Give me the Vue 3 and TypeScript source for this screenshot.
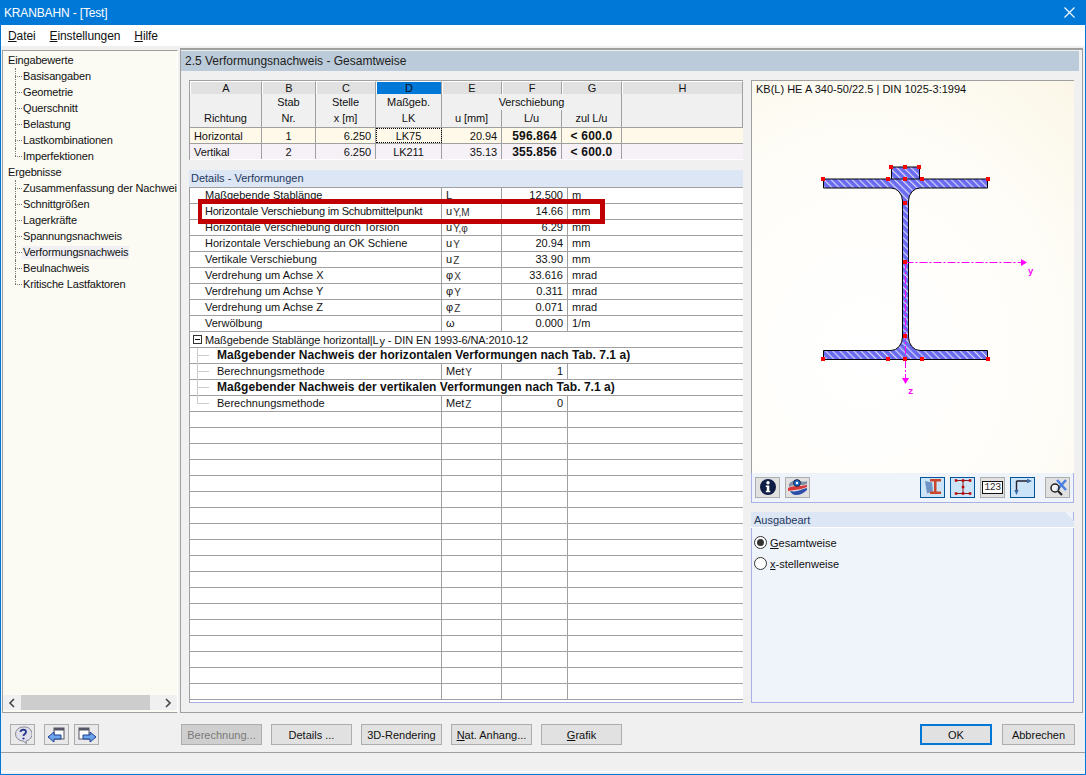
<script setup lang="ts">
const tree1 = ['Basisangaben','Geometrie','Querschnitt','Belastung','Lastkombinationen','Imperfektionen']
const tree2 = ['Zusammenfassung der Nachweise','Schnittgrößen','Lagerkräfte','Spannungsnachweis','Verformungsnachweis','Beulnachweis','Kritische Lastfaktoren']
interface Row { label: string; sym?: string; sub?: string; val?: string; unit?: string; tight?: boolean }
const rows: Row[] = [
  { label:'Maßgebende Stablänge', sym:'L', val:'12.500', unit:'m' },
  { label:'Horizontale Verschiebung im Schubmittelpunkt', sym:'u', sub:'Y,M', val:'14.66', unit:'mm', tight: true },
  { label:'Horizontale Verschiebung durch Torsion', sym:'u', sub:'Y,φ', val:'6.29', unit:'mm' },
  { label:'Horizontale Verschiebung an OK Schiene', sym:'u', sub:'Y', val:'20.94', unit:'mm' },
  { label:'Vertikale Verschiebung', sym:'u', sub:'Z', val:'33.90', unit:'mm' },
  { label:'Verdrehung um Achse X', sym:'φ', sub:'X', val:'33.616', unit:'mrad' },
  { label:'Verdrehung um Achse Y', sym:'φ', sub:'Y', val:'0.311', unit:'mrad' },
  { label:'Verdrehung um Achse Z', sym:'φ', sub:'Z', val:'0.071', unit:'mrad' },
  { label:'Verwölbung', sym:'ω', val:'0.000', unit:'1/m' },
]
const empties = Array.from({ length: 18 }, (_, i) => i)
const markers: [number, number][] = [[823,179],[888,179],[905,179],[922,179],[988,179],[891,167],[905,167],[919,167],[905,203],[905,262],[905,336],[823,359],[888,359],[905,359],[922,359],[988,359]]
</script>

<template>
  <div class="win">
    <div class="title">
      <span>KRANBAHN - [Test]</span>
      <svg width="11" height="11" viewBox="0 0 11 11"><path d="M.5 .5 10.500 10.500M10.500 .5 .5 10.500" stroke="#fff" stroke-width="1.100" fill="none"/></svg>
    </div>
    <div class="menu">
      <span><u>D</u>atei</span><span><u>E</u>instellungen</span><span><u>H</u>ilfe</span>
    </div>
    <div class="middle">
      <aside class="nav">
        <div class="navtree">
          <div class="troot">Eingabewerte</div>
          <div class="tgroup">
            <div v-for="t in tree1" :key="t" class="titem">{{ t }}</div>
          </div>
          <div class="troot">Ergebnisse</div>
          <div class="tgroup">
            <div v-for="t in tree2" :key="t" class="titem" :class="{ sel: t === 'Verformungsnachweis' }"><span>{{ t }}</span></div>
          </div>
        </div>
        <div class="hscroll">
          <svg width="8" height="10" viewBox="0 0 8 10"><path d="M6 1 2 5l4 4" fill="none" stroke="#444" stroke-width="1.600"/></svg>
          <div class="thumbtrack"><div class="thumb"></div></div>
          <svg width="8" height="10" viewBox="0 0 8 10"><path d="M2 1l4 4-4 4" fill="none" stroke="#444" stroke-width="1.600"/></svg>
        </div>
      </aside>
      <main class="content">
        <div class="heading">2.5 Verformungsnachweis - Gesamtweise</div>
        <div class="panels">
          <section class="leftcol">
            <div class="top">
              <div class="cols th">
                <b>A</b><b>B</b><b>C</b><b class="active">D</b><b>E</b><b>F</b><b>G</b><b>H</b>
              </div>
              <div class="cols hd">
                <div class="hc bot">Richtung</div>
                <div class="hc">Stab<br>Nr.</div>
                <div class="hc">Stelle<br>x [m]</div>
                <div class="hc">Maßgeb.<br>LK</div>
                <div class="span3">
                  <div class="vh">Verschiebung</div>
                  <div class="sub3"><span>u [mm]</span><span>L/u</span><span>zul L/u</span></div>
                </div>
                <div class="hc"></div>
              </div>
              <div class="cols dr r1">
                <div class="l">Horizontal</div><div class="c">1</div><div class="r">6.250</div><div class="c focus">LK75</div><div class="r">20.94</div><div class="r bold">596.864</div><div class="c bold">&lt; 600.0</div><div></div>
              </div>
              <div class="cols dr r2">
                <div class="l">Vertikal</div><div class="c">2</div><div class="r">6.250</div><div class="c">LK211</div><div class="r">35.13</div><div class="r bold">355.856</div><div class="c bold">&lt; 600.0</div><div></div>
              </div>
            </div>
            <div class="detailhead">Details - Verformungen</div>
            <div class="details">
              <div v-for="r in rows" :key="r.label" class="drow">
                <div class="lab" :class="{ tight: r.tight }">{{ r.label }}</div>
                <div class="sym">{{ r.sym }}<small v-if="r.sub">{{ r.sub }}</small></div>
                <div class="val">{{ r.val }}</div>
                <div class="unit">{{ r.unit }}</div>
              </div>
              <div class="drow groupr">
                <div class="glab"><i class="minus"></i>Maßgebende Stablänge horizontal|L<small>y</small>&nbsp;- DIN EN 1993-6/NA:2010-12</div>
              </div>
              <div class="drow wide treeline">
                <div class="lab2 strong">Maßgebender Nachweis der horizontalen Verformungen nach Tab. 7.1 a)</div>
              </div>
              <div class="drow treeline">
                <div class="lab2">Berechnungsmethode</div>
                <div class="sym">Met<small>Y</small></div><div class="val">1</div><div class="unit"></div>
              </div>
              <div class="drow wide treeline">
                <div class="lab2 strong">Maßgebender Nachweis der vertikalen Verformungen nach Tab. 7.1 a)</div>
              </div>
              <div class="drow treeline last">
                <div class="lab2">Berechnungsmethode</div>
                <div class="sym">Met<small>Z</small></div><div class="val">0</div><div class="unit"></div>
              </div>
              <div v-for="e in empties" :key="e" class="drow">
                <div class="lab"></div><div class="sym"></div><div class="val"></div><div class="unit"></div>
              </div>
              <div class="redbox"></div>
            </div>
          </section>
          <section class="rightcol">
            <div class="viewer">
              <div class="caption">KB(L) HE A 340-50/22.5 | DIN 1025-3:1994</div>
              <svg class="drawing" width="322" height="392" viewBox="752 81 322 392">
                <defs>
                  <pattern id="hatch" width="5" height="5" patternUnits="userSpaceOnUse" patternTransform="rotate(-45)">
                    <rect width="5" height="5" fill="#6a6af0"/>
                    <rect x="0" width="1.200" height="5" fill="#d4d6fa"/>
                  </pattern>
                </defs>
                <path d="M823.500 179H891.500V167H919.500V179H987.500V188H920A11.500 13 0 0 0 908.500 201V337A11.500 13.500 0 0 0 920 350.500H987.500V359.500H823.500V350.500H891A11.500 13.500 0 0 0 902.500 337V201A11.500 13 0 0 0 891 188H823.500Z" fill="url(#hatch)" stroke="#000" stroke-width="1"/>
                <path d="M891.500 179H919.500" stroke="#000" stroke-width="1"/>
                <path d="M905.500 262.500H1022" stroke="#f0f" stroke-dasharray="8 2 2 2" fill="none"/>
                <path d="M905.500 262V378" stroke="#f0f" stroke-dasharray="8 2 2 2" fill="none"/>
                <path d="M1021 259 1027 262.500 1021 266Z" fill="#f0f"/>
                <path d="M902 378H909L905.500 384Z" fill="#f0f"/>
                <rect v-for="(m, i) in markers" :key="i" :x="m[0] - 2" :y="m[1] - 2" width="4" height="4" fill="#f00"/>
                <text x="1028" y="274" class="axis">y</text>
                <text x="908" y="394" class="axis">z</text>
              </svg>
            </div>
            <div class="toolbar">
              <button class="tb"><svg width="18" height="18" viewBox="0 0 18 18"><circle cx="9" cy="9" r="8" fill="#0d1c44"/><circle cx="9" cy="4.800" r="1.700" fill="#fff"/><path d="M6.800 7.500h3.500v5.200h1v1.500H6.800v-1.500h1v-3.700h-1z" fill="#fff"/></svg></button>
              <button class="tb ml5"><svg width="22" height="18" viewBox="0 0 22 18"><path d="M2 6c3-4 8-5 11-3 3 1 5 1 7 0v3c-2 1-4 1-7 1-4 0-7 0-11 2z" fill="#7f8fa8"/><path d="M1 10c4-2 8-2 12-2l7-1v2l-6 2c-3 1-9 1-13 2z" fill="#d83a3a"/><path d="M3 13c4 1 9 0 13-2l4-1v2c-3 3-7 5-11 5-3 0-5-2-6-4z" fill="#2c4da8"/><circle cx="10" cy="5" r="3.400" fill="#1c6ac8" stroke="#112" stroke-width=".8"/><circle cx="10" cy="5" r="1.200" fill="#fff"/></svg></button>
              <div class="grow"></div>
              <button class="tb on"><svg width="20" height="18" viewBox="0 0 20 18"><path d="M2 3 9 4.500 10 13.500 4 15.500z" fill="#6e94c4"/><path d="M7 1h11v2.500h-4.500v10H18V16H7v-2.500h4V3.500H7z" fill="#c9452c"/></svg></button>
              <button class="tb on ml5"><svg width="20" height="18" viewBox="0 0 20 18"><path d="M2 2.500h16M2 15.500h16M10 2.500v13" stroke="#8a1a1a" fill="none"/><path d="M3 2.500h.1M10 2.500h.1M17 2.500h.1M3 15.500h.1M10 15.500h.1M17 15.500h.1M10 9h.1" stroke="#b00" stroke-width="2.400" stroke-linecap="square" fill="none"/></svg></button>
              <button class="tb ml5"><span class="num">123</span></button>
              <button class="tb on ml5"><svg width="20" height="18" viewBox="0 0 20 18"><path d="M3.500 3H17M3.500 3V14" stroke="#223" stroke-width="1.400" fill="none"/><path d="M19 3 14 .8v4.400zM3.500 17 1.300 12h4.400z" fill="#3a6aa8"/></svg></button>
              <button class="tb ml10"><svg width="20" height="18" viewBox="0 0 20 18"><path d="M9 2 18 12M18 2 9 12" stroke="#4a7fe0" stroke-width="2.500" fill="none"/><circle cx="7" cy="10" r="4" fill="#fff" fill-opacity=".6" stroke="#222" stroke-width="1.500"/><path d="M10 13 14 17" stroke="#222" stroke-width="2.200"/></svg></button>
            </div>
            <div class="output">
              <div class="outhead">Ausgabeart</div>
              <label class="radio"><i class="dot checked"></i><span><u>G</u>esamtweise</span></label>
              <label class="radio"><i class="dot"></i><span><u>x</u>-stellenweise</span></label>
            </div>
          </section>
        </div>
      </main>
    </div>
    <div class="footer">
      <button class="btn icon"><svg width="18" height="18" viewBox="0 0 18 18"><path d="M9 1a7.500 7 0 0 1 3 14l.5 2.500-3.500-2.500a7.500 7 0 0 1 0-14z" fill="#dfe0ea" stroke="#8a8a98"/><path d="M6.500 6c.3-3 5.500-3 5.500 0 0 2-2.500 2-2.500 4" fill="none" stroke="#2a3a90" stroke-width="1.800"/><circle cx="9.500" cy="12.500" r="1.100" fill="#2a3a90"/></svg></button>
      <button class="btn icon m9"><svg width="20" height="18" viewBox="0 0 20 18"><rect x="7" y="2" width="10" height="11" fill="#fff" stroke="#556"/><rect x="7" y="2" width="10" height="2.500" fill="#556"/><path d="M1 11 7 6v3h7v4H7v3z" fill="#6aa5ec" stroke="#1e3e90"/></svg></button>
      <button class="btn icon m5"><svg width="20" height="18" viewBox="0 0 20 18"><rect x="2" y="2" width="10" height="11" fill="#fff" stroke="#556"/><rect x="2" y="2" width="10" height="2.500" fill="#556"/><path d="M19 11 13 6v3H6v4h7v3z" fill="#6aa5ec" stroke="#1e3e90"/></svg></button>
      <button class="btn wide disabled m82">Berechnung...</button>
      <button class="btn wide m9">Details ...</button>
      <button class="btn wide m9">3D-Rendering</button>
      <button class="btn wide m9"><u>N</u>at. Anhang...</button>
      <button class="btn wide m9"><u>G</u>rafik</button>
      <div class="grow"></div>
      <button class="btn ok">OK</button>
      <button class="btn cancel">Abbrechen</button>
    </div>
    <div class="status"></div>
  </div>
</template>

<style>
html, body { margin: 0; padding: 0; background: #f0f0f0; }
</style>

<style scoped>
.win { box-sizing: border-box; width: 1086px; height: 775px; display: flex; flex-direction: column; overflow: hidden; background: #f0f0f0; border: 1px solid #0078d7; border-top: 0; font: 11px/16px "Liberation Sans", Arial, sans-serif; color: #111; }
.title { height: 25px; flex: none; margin: 0 -1px; padding: 0 11px 0 4px; background: #0078d7; color: #fff; display: flex; align-items: center; justify-content: space-between; font-size: 12px; letter-spacing: -0.150px; }
.menu { height: 21px; flex: none; background: #fff; display: flex; gap: 14px; padding-left: 7px; align-items: center; font-size: 12px; letter-spacing: -0.100px; }
.middle { height: 667px; flex: none; display: flex; padding-top: 2px; box-sizing: border-box; }
.nav { box-sizing: border-box; width: 176px; margin: 2px 0 0 1px; flex: none; height: 663px; background: #fbfaf3; border: 1px solid #a0a0a0; border-right: 1px solid #fff; display: flex; flex-direction: column; overflow: hidden; padding-bottom: 2px; }
.navtree { flex: 1; padding: 1px 0 0 5px; white-space: nowrap; overflow: hidden; letter-spacing: -0.150px; }
.troot { height: 16px; }
.tgroup { margin-left: 7px; }
.titem { height: 16px; padding-left: 8px; position: relative; }
.titem::before { content: ""; position: absolute; left: 0; top: 8px; width: 7px; border-top: 1px dotted #777; }
.titem::after { content: ""; position: absolute; left: 0; top: 0; height: 16px; border-left: 1px dotted #777; }
.titem:last-child::after { height: 8px; }
.sel span { background: #efeff4; display: inline-block; line-height: 13px; margin-left: -1px; padding: 0 1px; }
.hscroll { height: 15px; flex: none; background: #f0f0f0; display: flex; align-items: center; padding: 0 5px; gap: 5px; }
.thumbtrack { flex: 1; height: 15px; }
.thumb { width: 129px; height: 15px; background: #cdcdcd; }
.content { width: 903px; flex: none; margin-left: 2px; box-sizing: border-box; height: 665px; border: 1px solid #a0a0a0; border-top: 2px solid #a0a0a0; display: flex; flex-direction: column; }
.heading { height: 20px; flex: none; margin-top: 1px; margin-right: 3px; background: #bccbd9; font-size: 12px; line-height: 20px; padding-left: 4px; color: #222; }
.panels { display: flex; padding: 9px 0 0 8px; }
.leftcol { width: 554px; flex: none; }
.top { border-left: 1px solid #a0a0a0; background: #fff; letter-spacing: -0.080px; }
.cols { display: grid; grid-template-columns: 72px 54px 60px 66px 60px 60px 60px 121px; }
.th { height: 14px; box-sizing: border-box; background: #a0a0a0; padding-top: 1px; }
.th b { font-weight: 400; background: #e1e1e1; border-top: 1px solid #fff; border-left: 1px solid #fff; border-right: 1px solid #a0a0a0; text-align: center; line-height: 13px; box-sizing: border-box; height: 13px; }
.th b.active { background: #0078d7; color: #111; }
.hd { height: 34px; background: #f0f0f0; border-bottom: 1px solid #a0a0a0; box-sizing: border-box; }
.hc { text-align: center; border-right: 1px solid #a0a0a0; line-height: 16px; }
.bot { padding-top: 16px; }
.span3 { grid-column: span 3; display: flex; flex-direction: column; border-right: 1px solid #a0a0a0; text-align: center; }
.vh { height: 16px; }
.sub3 { display: grid; grid-template-columns: 60px 60px 59px; height: 17px; }
.sub3 span { border-right: 1px solid #a0a0a0; }
.sub3 span:last-child { border-right: 0; }
.dr { height: 16px; box-sizing: border-box; border-bottom: 1px solid #a0a0a0; }
.dr > div { border-right: 1px solid #a0a0a0; line-height: 16px; box-sizing: border-box; height: 15px; }
.dr > div:last-child { border-right: 0; }
.r1 { background: #fff9ea; }
.r2 { background: #f6f1f7; border-bottom: 1px solid #fff; }
.l { padding-left: 4px; }
.c { text-align: center; }
.r { text-align: right; padding-right: 4px; }
.bold { font-weight: 700; font-size: 12px; letter-spacing: 0.200px; }
.focus { outline: 1px dotted #000; outline-offset: -1px; }
.detailhead { margin-top: 10px; height: 17px; line-height: 16px; background: #dce6f4; padding-left: 2px; color: #1f3860; box-sizing: border-box; }
.details { position: relative; background: #fff; border-left: 1px solid #a0a0a0; border-top: 1px solid #a0a0a0; border-bottom: 1px solid #a9b0e6; padding-bottom: 2px; box-sizing: content-box; }
.drow { height: 16px; box-sizing: border-box; border-bottom: 1px solid #a0a0a0; display: grid; grid-template-columns: 252px 60px 66px 1fr; white-space: nowrap; }
.drow > div { line-height: 14px; height: 15px; overflow: hidden; }
.lab { border-right: 1px solid #a0a0a0; padding-left: 15px; }
.tight { letter-spacing: -0.230px; }
.lab2 { border-right: 1px solid #a0a0a0; padding-left: 27px; }
.strong { font-weight: 700; font-size: 12px; border-right: 0; letter-spacing: 0.040px; }
.sym { border-right: 1px solid #a0a0a0; padding-left: 4px; }
.sym small { font-size: 10px; margin-left: 1px; vertical-align: -1px; color: #333; }
.val { border-right: 1px solid #a0a0a0; text-align: right; padding-right: 4px; }
.unit { padding-left: 4px; }
.wide, .groupr { display: block; }
.glab { padding-left: 3px; display: flex; align-items: center; letter-spacing: -0.110px; }
.glab small { font-size: 11px; margin: 3px 0 0 1px; }
.minus { width: 9px; height: 9px; border: 1px solid #333; margin-right: 3px; position: relative; box-sizing: border-box; flex: none; }
.minus::after { content: ""; position: absolute; left: 1px; right: 1px; top: 3px; border-top: 1px solid #111; }
.treeline { position: relative; }
.treeline::before { content: ""; position: absolute; left: 7px; top: 0; height: 16px; border-left: 1px solid #ccc; }
.treeline::after { content: ""; position: absolute; left: 7px; top: 7px; width: 12px; border-top: 1px solid #ccc; }
.treeline.last::before { height: 8px; }
.redbox { position: absolute; left: 8px; top: 11px; width: 407px; height: 25px; border: 5px solid #c00000; border-left-width: 4px; box-sizing: border-box; pointer-events: none; }
.rightcol { margin-left: 8px; width: 323px; flex: none; display: flex; flex-direction: column; }
.viewer { position: relative; height: 393px; background: radial-gradient(ellipse 120% 110% at 35% 70%, #ffffff 0%, #fefdf8 50%, #fbf6e6 85%, #f9f3e0 100%); border-left: 1px solid #a0a0a0; border-top: 1px solid #a0a0a0; box-sizing: border-box; }
.caption { position: absolute; left: 4px; top: 0; }
.drawing { display: block; }
.axis { fill: #f0f; font: 700 9px "Liberation Mono", monospace; }
.toolbar { height: 30px; box-sizing: border-box; background: #eff3fa; border: 1px solid #a9b0e6; border-top: 0; display: flex; align-items: center; padding: 0 3px 1px 3px; }
.tb { width: 25px; height: 21px; box-sizing: border-box; padding: 0; background: #e1e1e1; border: 1px solid #adadad; display: flex; align-items: center; justify-content: center; }
.tb.on { background: #cce4f7; border: 1px solid #005499; }
.ml5 { margin-left: 5px; }
.ml10 { margin-left: 10px; }
.num { font: 10px/11px "Liberation Mono", monospace; border: 1px solid #111; background: #fff; color: #333; padding: 0 1px; letter-spacing: -0.500px; }
.grow { flex: 1; }
.output { margin-top: 9px; height: 191px; box-sizing: border-box; background: #eff3fa; border: 1px solid #a9b0e6; border-top: 0; }
.outhead { height: 16px; margin: 0 -1px; padding-left: 3px; color: #1f3860; background: #dce6f4; clip-path: polygon(0 0, calc(100% - 9px) 0, 100% 9px, 100% 100%, 0 100%); border-bottom: 1px solid #fff; box-sizing: border-box; line-height: 16px; }
.radio { display: flex; align-items: center; height: 21px; padding-left: 2px; }
.outhead + .radio { margin-top: 4px; }
.dot { width: 13px; height: 13px; box-sizing: border-box; border: 1px solid #333; border-radius: 50%; background: #fff; margin-right: 3px; position: relative; }
.dot.checked::after { content: ""; position: absolute; inset: 2px; background: #333; border-radius: 50%; }
.footer { height: 40px; flex: none; display: flex; align-items: flex-start; padding: 11px 10px 0 9px; box-sizing: border-box; border-bottom: 1px solid #a0a0a0; }
.btn { height: 21px; box-sizing: border-box; background: #e1e1e1; border: 1px solid #adadad; padding: 0; font: 11px "Liberation Sans", Arial, sans-serif; color: #111; display: flex; align-items: center; justify-content: center; }
.btn.icon { width: 25px; background: #e9e9e9; }
.btn.wide { width: 81px; }
.btn.disabled { background: #cfcfcf; color: #7a7a7a; }
.m9 { margin-left: 9px; }
.m5 { margin-left: 5px; }
.m82 { margin-left: 82px; }
.ok { width: 72px; border: 2px solid #0078d7; }
.cancel { width: 73px; margin-left: 10px; }
.status { height: 19px; flex: none; border-bottom: 1px solid #fff; box-sizing: border-box; }
</style>
